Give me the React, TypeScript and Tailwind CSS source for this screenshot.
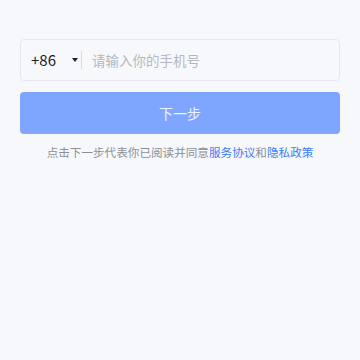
import { useState } from 'react'

// Phone login step: country code + phone input, primary "next" button and
// the agreement line underneath.
export default function App() {
  const [phone, setPhone] = useState('')
  const font = 'font-["Noto_Sans_CJK_SC","Liberation_Sans",sans-serif]'
  return (
    <div className={`min-h-[360px] w-[360px] bg-[#f7f8fc] px-5 pt-[39px] ${font}`}>
      <div className="flex h-[42px] items-center rounded-[4px] border border-[#e6e8ee] bg-[#f7f8fc] pl-[10px]">
        <button className="flex items-center text-[15px] text-[#222]">
          <span className="w-[41px] text-left">+86</span>
          <svg width="6" height="4" viewBox="0 0 6 4">
            <path d="M0 0h6L3 4z" fill="#222" />
          </svg>
        </button>
        <div className="ml-[3px] h-[18px] w-px bg-[#d8dbe2]" />
        <input
          value={phone}
          onChange={(e) => setPhone(e.target.value)}
          placeholder="请输入你的手机号"
          className="ml-[10px] flex-1 bg-transparent text-[13.5px] text-[#222] outline-none placeholder:text-[#b4b8c2]"
        />
      </div>
      <button className="mt-[11px] flex h-[42px] w-full items-center justify-center rounded-[4px] bg-[#7fa6ff] text-[14px] text-[#eef3ff]">
        下一步
      </button>
      <p className="mt-[10px] text-center text-[11.6px] leading-[16px] text-[#8c8f96]">
        点击下一步代表你已阅读并同意
        <a className="text-[#3b7bf6]">服务协议</a>和
        <a className="text-[#3b7bf6]">隐私政策</a>
      </p>
    </div>
  )
}
